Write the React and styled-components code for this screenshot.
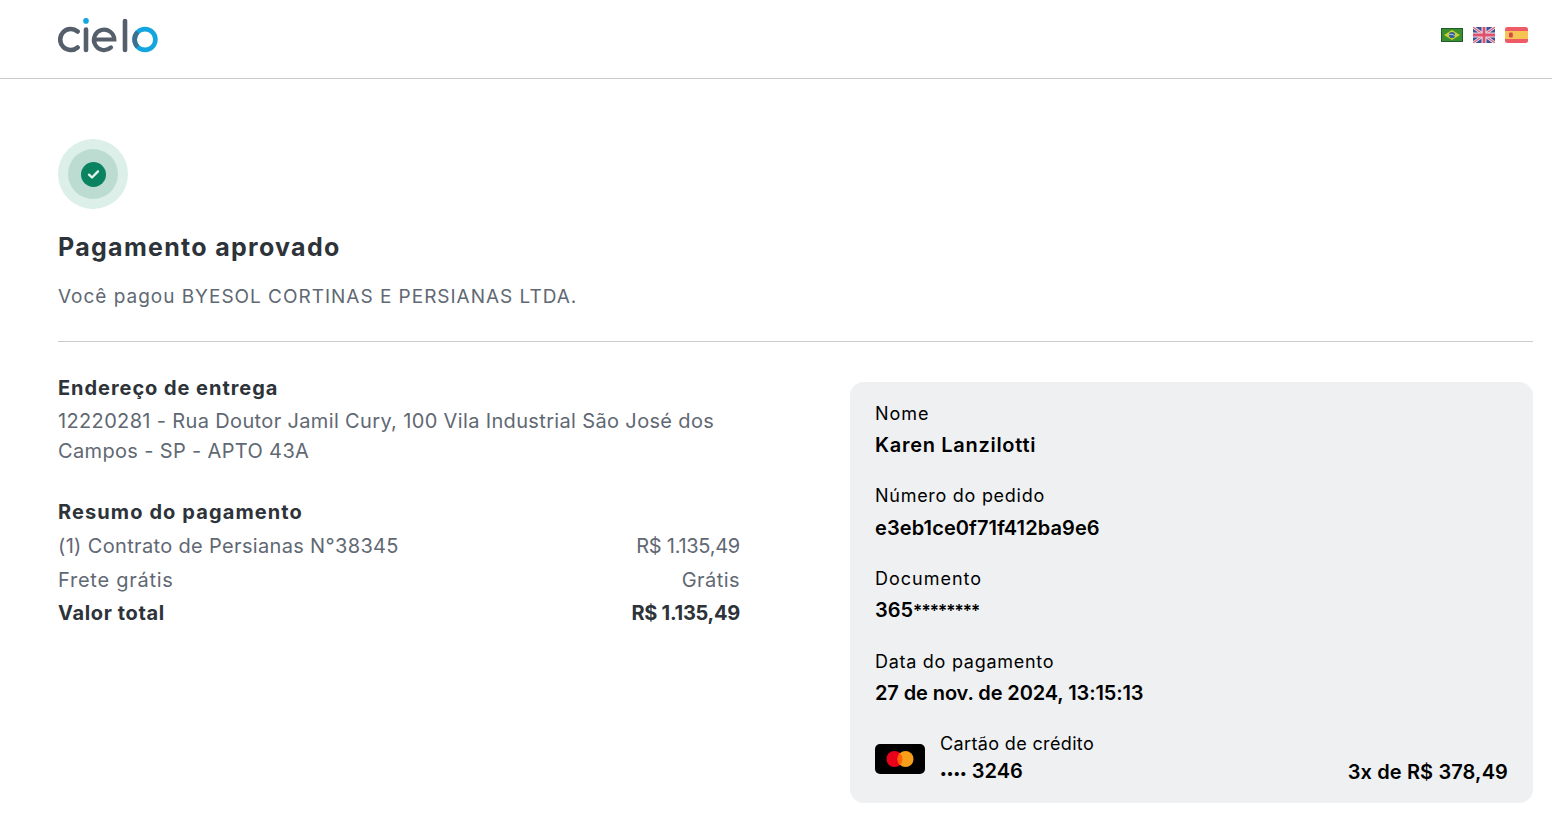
import React from 'react';
import styled, { createGlobalStyle } from 'styled-components';

const GlobalStyle = createGlobalStyle`
  html, body {
    margin: 0;
    padding: 0;
    background: #fff;
    font-family: "Inter", "Noto Sans", sans-serif;
  }
`;

function Logo() {
  return (
    <svg width="100" height="36" viewBox="0 -1 100 36" fill="none">
      <path d="M19.6 13.6 A10.5 10.5 0 1 0 19.6 29.4" stroke="#555f6b" strokeWidth="4.6" strokeLinecap="round" />
      <circle cx="28" cy="2.9" r="2.8" fill="#12a5e0" />
      <path d="M28 11.5 V32" stroke="#555f6b" strokeWidth="4.6" strokeLinecap="round" />
      <path d="M36.5 21.5 H56.3 A10.2 10.2 0 1 0 53 29.4" stroke="#555f6b" strokeWidth="4.2" strokeLinecap="round" />
      <path d="M67 3 V32" stroke="#555f6b" strokeWidth="4.6" strokeLinecap="round" />
      <circle cx="87" cy="21.5" r="10.4" stroke="#12a5e0" strokeWidth="4.6" />
      <path d="M79.6 14.2 A10.4 10.4 0 0 0 79.6 28.8" stroke="#3f6f8f" strokeWidth="4.6" />
    </svg>
  );
}

function BrazilFlag() {
  return (
    <svg width="22" height="14" viewBox="0 0 22 14">
      <rect width="22" height="14" fill="#1f5c2a" />
      <rect x="1" y="1" width="20" height="12" fill="#3c8f2f" />
      <path d="M11 2 L19 7 L11 12 L3 7 Z" fill="#c9d02c" />
      <circle cx="11" cy="7" r="3.1" fill="#2f5fa5" />
      <path d="M8.1 6.5 Q11 5.6 13.9 7.7" stroke="#e6eef5" strokeWidth="0.7" fill="none" />
    </svg>
  );
}

function UkFlag() {
  return (
    <svg width="22" height="16" viewBox="0 0 22 16">
      <rect width="22" height="16" rx="2" fill="#3d4f96" />
      <path d="M0 0 L22 16 M22 0 L0 16" stroke="#e8e0e6" strokeWidth="3" />
      <path d="M0 0 L22 16 M22 0 L0 16" stroke="#dc5f7c" strokeWidth="1.1" />
      <path d="M11 0 V16 M0 8 H22" stroke="#e8e0e6" strokeWidth="5" />
      <path d="M11 0 V16 M0 8 H22" stroke="#e0506f" strokeWidth="2.8" />
    </svg>
  );
}

function SpainFlag() {
  return (
    <svg width="23" height="16" viewBox="0 0 23 16">
      <rect width="23" height="16" rx="2.5" fill="#ee5a66" />
      <rect y="4" width="23" height="8" fill="#f6c453" />
      <rect x="4" y="5.5" width="3.8" height="5" rx="1.3" fill="#d2474f" />
    </svg>
  );
}

function CardBrand() {
  return (
    <svg width="50" height="30" viewBox="0 0 50 30">
      <rect width="50" height="30" rx="5" fill="#000" />
      <circle cx="19.5" cy="15" r="8" fill="#eb001b" />
      <circle cx="30.5" cy="15" r="8" fill="#f79e1b" />
      <path d="M25 9.2 A8 8 0 0 1 25 20.8 A8 8 0 0 1 25 9.2 Z" fill="#ff5f00" />
    </svg>
  );
}

function App() {
  return (
    <Page>
      <GlobalStyle />
      <Header>
        <Logo />
        <Flags>
          <BrazilFlag />
          <UkFlag />
          <SpainFlag />
        </Flags>
      </Header>
      <Main>
        <StatusOuter>
          <StatusMiddle>
            <StatusInner>
              <svg width="13" height="11" viewBox="0 0 13 11" fill="none">
                <path d="M2 5.6 L5 8.5 L11 2.4" stroke="#e6f4ef" strokeWidth="2.3" strokeLinecap="round" strokeLinejoin="round" />
              </svg>
            </StatusInner>
          </StatusMiddle>
        </StatusOuter>
        <Title>Pagamento aprovado</Title>
        <Subtitle>Você pagou BYESOL CORTINAS E PERSIANAS LTDA.</Subtitle>
        <Divider />
        <Columns>
          <Left>
            <SectionTitle>Endereço de entrega</SectionTitle>
            <Address>
              12220281 - Rua Doutor Jamil Cury, 100 Vila Industrial São José dos Campos - SP - APTO 43A
            </Address>
            <SummaryTitle>Resumo do pagamento</SummaryTitle>
            <SummaryRow>
              <RowLabel $tracking={0.34}>(1) Contrato de Persianas N°38345</RowLabel>
              <Amount>R$ 1.135,49</Amount>
            </SummaryRow>
            <SummaryRow>
              <RowLabel $tracking={0.75}>Frete grátis</RowLabel>
              <span>Grátis</span>
            </SummaryRow>
            <SummaryRow $total>
              <RowLabel $tracking={0.65}>Valor total</RowLabel>
              <Amount>R$ 1.135,49</Amount>
            </SummaryRow>
          </Left>
          <Card>
            <Field>
              <Label $tracking={1}>Nome</Label>
              <Value $tracking={0.7}>Karen Lanzilotti</Value>
            </Field>
            <Field>
              <Label $tracking={0.72}>Número do pedido</Label>
              <Value $tracking={0.1}>e3eb1ce0f71f412ba9e6</Value>
            </Field>
            <Field>
              <Label $tracking={1}>Documento</Label>
              <Value>365<Masked>********</Masked></Value>
            </Field>
            <Field>
              <Label $tracking={0.72}>Data do pagamento</Label>
              <Value $tracking={-0.1}>27 de nov. de 2024, 13:15:13</Value>
            </Field>
            <PaymentRow>
              <CardBrand />
              <PaymentInfo>
                <Label $tracking={0.36}>Cartão de crédito</Label>
                <PaymentValue><Dots>••••</Dots> 3246</PaymentValue>
              </PaymentInfo>
              <Installments>3x de R$ 378,49</Installments>
            </PaymentRow>
          </Card>
        </Columns>
      </Main>
    </Page>
  );
}

export default App;

const Page = styled.div`
  min-height: 825px;
  background: #fff;
`;

const Header = styled.header`
  display: flex;
  justify-content: space-between;
  align-items: center;
  box-sizing: border-box;
  height: 79px;
  padding: 0 24px 8px 58px;
  border-bottom: 1px solid #c9cccf;
`;

const Flags = styled.div`
  display: flex;
  align-items: center;
  gap: 10px;
`;

const Main = styled.main`
  padding: 60px 19px 0 58px;
`;

const StatusOuter = styled.div`
  display: flex;
  justify-content: center;
  align-items: center;
  width: 70px;
  height: 70px;
  border-radius: 50%;
  background: #dcefe9;
`;

const StatusMiddle = styled.div`
  display: flex;
  justify-content: center;
  align-items: center;
  width: 50px;
  height: 50px;
  border-radius: 50%;
  background: #bcdcd2;
`;

const StatusInner = styled.div`
  display: flex;
  justify-content: center;
  align-items: center;
  width: 25px;
  height: 25px;
  border-radius: 50%;
  background: #0a8460;
`;

const Title = styled.h1`
  margin: 22px 0 0;
  font-size: 25px;
  line-height: 32px;
  font-weight: 700;
  letter-spacing: 1.3px;
  color: #2d3339;
`;

const Subtitle = styled.p`
  margin: 20px 0 0;
  font-size: 19px;
  line-height: 28px;
  letter-spacing: 0.98px;
  color: #5f6873;
`;

const Divider = styled.hr`
  margin: 30px 0 0;
  border: 0;
  border-top: 1px solid #c9cccf;
`;

const Columns = styled.div`
  display: grid;
  grid-template-columns: 682px 683px;
  justify-content: space-between;
  margin-top: 40px;
`;

const Left = styled.div`
  color: #5f6873;
`;

const SectionTitle = styled.h2`
  margin: -10px 0 0;
  font-size: 20px;
  line-height: 32px;
  font-weight: 700;
  letter-spacing: 0.95px;
  color: #2d3339;
`;

const Address = styled.p`
  margin: 2px 0 0;
  font-size: 20px;
  line-height: 30px;
  letter-spacing: 0.35px;
`;

const SummaryTitle = styled(SectionTitle)`
  margin: 30px 0 2px;
  letter-spacing: 1.1px;
`;

const SummaryRow = styled.div`
  display: flex;
  justify-content: space-between;
  font-size: 20px;
  line-height: 33.5px;
  letter-spacing: 0.45px;
  font-weight: ${(p) => (p.$total ? 700 : 400)};
  color: ${(p) => (p.$total ? '#2d3339' : '#5f6873')};
`;

const RowLabel = styled.span`
  letter-spacing: ${(p) => p.$tracking}px;
`;

const Amount = styled.span`
  letter-spacing: -0.27px;
`;

const Card = styled.section`
  display: flex;
  flex-direction: column;
  box-sizing: border-box;
  height: 421px;
  padding: 18.5px 25px 0;
  border-radius: 14px;
  background: #eff0f2;
  color: #000;
`;

const Field = styled.div`
  height: 82.7px;
`;

const Label = styled.div`
  font-size: 18px;
  line-height: 26px;
  letter-spacing: ${(p) => p.$tracking}px;
`;

const Value = styled.div`
  margin-top: 4.5px;
  font-size: 20px;
  line-height: 28px;
  font-weight: 600;
  letter-spacing: ${(p) => p.$tracking || 0}px;
`;

const Masked = styled.span`
  font-size: 17px;
  letter-spacing: -0.9px;
`;

const PaymentRow = styled.div`
  display: flex;
  align-items: center;
  gap: 15px;
`;

const PaymentInfo = styled.div`
  flex: 1;
`;

const PaymentValue = styled.div`
  font-size: 20px;
  line-height: 28px;
  font-weight: 600;
`;

const Dots = styled.span`
  font-size: 13px;
  letter-spacing: 0.15px;
`;

const Installments = styled.div`
  align-self: flex-end;
  margin-bottom: 1px;
  font-size: 20px;
  line-height: 28px;
  font-weight: 600;
  letter-spacing: 0.13px;
`;
